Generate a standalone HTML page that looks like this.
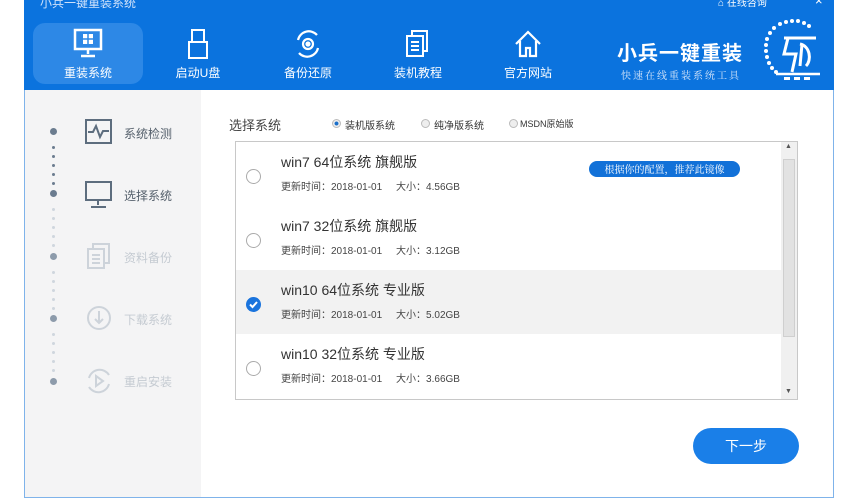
<!DOCTYPE html>
<html><head><meta charset="utf-8"><style>
*{margin:0;padding:0;box-sizing:border-box}
body{width:855px;height:501px;background:#fff;position:relative;overflow:hidden;font-family:"Liberation Sans","Noto Sans CJK SC",sans-serif}
.abs{position:absolute}
.hdr{left:24px;top:0;width:810px;height:90px;background:#0b73de}
.win{left:24px;top:90px;width:810px;height:408px;border:1px solid #7fb3ea;border-top:none;background:#fff}
.side{left:25px;top:90px;width:176px;height:407px;background:#f4f4f5}
.tab{position:absolute;top:23px;width:110px;height:61px;color:#fff;font-size:12px;text-align:center}
.tab span{position:absolute;left:0;right:0;top:41px}
.tab svg{position:absolute;left:40px;top:5px}
.step{position:absolute;left:124px;font-size:12px}
.dot{position:absolute;width:7px;height:7px;border-radius:50%;left:50px}
.sd{position:absolute;width:3px;height:3px;border-radius:50%;left:52px}
.row{position:absolute;left:236px;width:545px;height:64px}
.t1{position:absolute;left:45px;top:10px;font-size:14px;color:#333}
.t2{position:absolute;left:45px;top:36px;font-size:10px;color:#444}
.rad{position:absolute;left:10px;top:27px;width:15px;height:15px;border:1px solid #aaa;border-radius:50%;background:#fff}
</style></head><body>
<div class="abs hdr"></div>
<div class="abs" style="left:40px;top:-6px;color:#cfe2fb;font-size:12px">小兵一键重装系统</div>
<div class="abs" style="left:718px;top:-6px;color:#fff;font-size:10px">⌂ 在线咨询</div>
<div class="abs" style="left:815px;top:-7px;color:#fff;font-size:13px">×</div>
<div class="tab" style="left:33px;background:#2d88e6;border-radius:12px">
<svg width="30" height="32" viewBox="0 0 30 32" fill="none" stroke="#fff" stroke-width="2.5"><rect x="2" y="2" width="26" height="19"/><path d="M15 21v5M8 28h14" /><rect x="10" y="6" width="10" height="10" fill="#fff" stroke="none"/><path d="M15 6v10M10 11h10" stroke="#2d88e6" stroke-width="1.5"/></svg><span>重装系统</span></div>
<div class="tab" style="left:143px"><svg width="30" height="32" viewBox="0 0 30 32" fill="none" stroke="#fff" stroke-width="2"><rect x="9" y="2" width="12" height="12"/><rect x="6" y="14" width="18" height="16"/></svg><span>启动U盘</span></div>
<div class="tab" style="left:253px"><svg width="30" height="32" viewBox="0 0 30 32" fill="none" stroke="#fff" stroke-width="2.2"><path d="M5 12a11 11 0 0 1 19-5M25 20a11 11 0 0 1-19 5"/><circle cx="15" cy="16" r="5"/><circle cx="15" cy="16" r="1.5" fill="#fff"/></svg><span>备份还原</span></div>
<div class="tab" style="left:363px"><svg width="30" height="32" viewBox="0 0 30 32" fill="none" stroke="#fff" stroke-width="2"><rect x="4" y="8" width="16" height="20"/><path d="M9 8V3h15v20h-4M8 14h8M8 18h8M8 22h8"/></svg><span>装机教程</span></div>
<div class="tab" style="left:473px"><svg width="30" height="32" viewBox="0 0 30 32" fill="none" stroke="#fff" stroke-width="2.2"><path d="M3 16L15 4l12 12M7 13v15h6v-8h4v8h6V13"/></svg><span>官方网站</span></div>
<div class="abs" style="left:617px;top:37px;color:#fff;font-size:20px;font-weight:bold;letter-spacing:1px">小兵一键重装</div>
<div class="abs" style="left:621px;top:67px;color:#dce9fb;font-size:10px;letter-spacing:2px;font-family:'Noto Serif CJK SC',serif">快速在线重装系统工具</div>
<svg class="abs" style="left:758px;top:18px" width="72" height="64" viewBox="0 0 72 64" fill="#fff"><g>
<circle cx="28" cy="4" r="2"/><circle cx="34" cy="3" r="2"/><circle cx="40" cy="3" r="2"/><circle cx="46" cy="5" r="2"/><circle cx="51" cy="8" r="2"/><circle cx="22" cy="6" r="2"/><circle cx="16" cy="10" r="2"/><circle cx="12" cy="15" r="2"/><circle cx="9" cy="21" r="2"/><circle cx="8" cy="27" r="2"/><circle cx="8" cy="33" r="2"/><circle cx="9" cy="39" r="2"/><circle cx="11" cy="45" r="2"/><circle cx="14" cy="50" r="2"/><circle cx="18" cy="54" r="2"/></g>
<path d="M26 20h32M30 20l-4 16h12l-4 18M42 26c10 2 12 16 6 22M44 26l-2 22" stroke="#fff" stroke-width="3" fill="none"/><path d="M18 56h44" stroke="#fff" stroke-width="2.5"/><rect x="26" y="59" width="6" height="3"/><rect x="36" y="59" width="6" height="3"/><rect x="46" y="59" width="6" height="3"/></svg>
<div class="abs win"></div>
<div class="abs side"></div>
<!-- steps -->
<div class="dot" style="top:128px;background:#6b7c8f"></div>
<div class="dot" style="top:190px;background:#6b7c8f"></div>
<div class="dot" style="top:253px;background:#8d9bab"></div>
<div class="dot" style="top:315px;background:#8d9bab"></div>
<div class="dot" style="top:378px;background:#8d9bab"></div>
<div class="sd" style="top:146px;background:#6b7c8f"></div><div class="sd" style="top:155px;background:#6b7c8f"></div><div class="sd" style="top:164px;background:#6b7c8f"></div><div class="sd" style="top:173px;background:#6b7c8f"></div><div class="sd" style="top:182px;background:#6b7c8f"></div>
<div class="sd" style="top:208px;background:#cfd6de"></div><div class="sd" style="top:217px;background:#cfd6de"></div><div class="sd" style="top:226px;background:#cfd6de"></div><div class="sd" style="top:235px;background:#cfd6de"></div><div class="sd" style="top:244px;background:#cfd6de"></div>
<div class="sd" style="top:271px;background:#cfd6de"></div><div class="sd" style="top:280px;background:#cfd6de"></div><div class="sd" style="top:289px;background:#cfd6de"></div><div class="sd" style="top:298px;background:#cfd6de"></div><div class="sd" style="top:307px;background:#cfd6de"></div>
<div class="sd" style="top:333px;background:#cfd6de"></div><div class="sd" style="top:342px;background:#cfd6de"></div><div class="sd" style="top:351px;background:#cfd6de"></div><div class="sd" style="top:360px;background:#cfd6de"></div><div class="sd" style="top:369px;background:#cfd6de"></div>
<svg class="abs" style="left:85px;top:118px" width="28" height="28" fill="none" stroke="#5d6d7e" stroke-width="2"><rect x="1" y="2" width="25" height="23"/><path d="M3 14h5l3-6 4 11 3-6h6"/></svg>
<div class="step" style="top:125px;color:#55606c">系统检测</div>
<svg class="abs" style="left:85px;top:180px" width="28" height="30" fill="none" stroke="#5d6d7e" stroke-width="2"><rect x="1" y="2" width="25" height="18"/><path d="M13 20v5M6 27h15"/></svg>
<div class="step" style="top:187px;color:#55606c">选择系统</div>
<svg class="abs" style="left:86px;top:242px" width="28" height="28" fill="none" stroke="#cdd3da" stroke-width="2"><rect x="2" y="7" width="16" height="19"/><path d="M7 7V2h16v19h-5M6 13h8M6 17h8M6 21h8"/></svg>
<div class="step" style="top:249px;color:#c5cbd2">资料备份</div>
<svg class="abs" style="left:86px;top:305px" width="28" height="28" fill="none" stroke="#cdd3da" stroke-width="2"><circle cx="13" cy="13" r="11"/><path d="M13 6v12M9 14l4 4 4-4"/></svg>
<div class="step" style="top:311px;color:#c5cbd2">下载系统</div>
<svg class="abs" style="left:84px;top:366px" width="30" height="30" fill="none" stroke="#cdd3da" stroke-width="2"><path d="M5 12a11 11 0 0 1 20-3M25 18a11 11 0 0 1-20 3"/><path d="M12 10v10l7-5z"/></svg>
<div class="step" style="top:373px;color:#c5cbd2">重启安装</div>
<!-- content -->
<div class="abs" style="left:229px;top:115px;font-size:13px;color:#444">选择系统</div>
<div class="abs" style="left:332px;top:119px;width:9px;height:9px;border-radius:50%;border:1px solid #bbb;background:radial-gradient(#1a6fc9 35%,#eee 45%)"></div>
<div class="abs" style="left:345px;top:117px;font-size:10px;color:#333">装机版系统</div>
<div class="abs" style="left:421px;top:119px;width:9px;height:9px;border-radius:50%;border:1px solid #bbb;background:#eee"></div>
<div class="abs" style="left:434px;top:117px;font-size:10px;color:#333">纯净版系统</div>
<div class="abs" style="left:509px;top:119px;width:9px;height:9px;border-radius:50%;border:1px solid #bbb;background:#eee"></div>
<div class="abs" style="left:520px;top:117px;font-size:9px;color:#333">MSDN原始版</div>
<div class="abs" style="left:235px;top:141px;width:563px;height:259px;border:1px solid #c8c8c8;background:#fff"></div>
<div class="row" style="top:142px"><div class="rad"></div><div class="t1">win7 64位系统 旗舰版</div><div class="t2">更新时间：2018-01-01 &nbsp;&nbsp;&nbsp; 大小：4.56GB</div></div>
<div class="abs" style="left:589px;top:161px;width:151px;height:16px;border-radius:8px;background:#1271d8;color:#fff;font-size:10px;text-align:center;line-height:16px;font-family:'Noto Serif CJK SC',serif">根据你的配置，推荐此镜像</div>
<div class="row" style="top:206px"><div class="rad"></div><div class="t1">win7 32位系统 旗舰版</div><div class="t2">更新时间：2018-01-01 &nbsp;&nbsp;&nbsp; 大小：3.12GB</div></div>
<div class="row" style="top:270px;background:#f2f2f2"><div class="rad" style="border:none;background:#1a74dd"><svg width="15" height="15"><path d="M4 7.5l2.5 2.5 4.5-5" stroke="#fff" stroke-width="2" fill="none"/></svg></div><div class="t1">win10 64位系统 专业版</div><div class="t2">更新时间：2018-01-01 &nbsp;&nbsp;&nbsp; 大小：5.02GB</div></div>
<div class="row" style="top:334px"><div class="rad"></div><div class="t1">win10 32位系统 专业版</div><div class="t2">更新时间：2018-01-01 &nbsp;&nbsp;&nbsp; 大小：3.66GB</div></div>
<div class="abs" style="left:781px;top:142px;width:16px;height:257px;background:#f0f0f0"></div>
<div class="abs" style="left:783px;top:159px;width:12px;height:178px;background:#e2e2e2;border:1px solid #cfcfcf"></div>
<div class="abs" style="left:785px;top:143px;font-size:7px;color:#555">▲</div>
<div class="abs" style="left:785px;top:388px;font-size:7px;color:#555">▼</div>
<div class="abs" style="left:693px;top:428px;width:106px;height:36px;border-radius:18px;background:#1a7fe8;color:#fff;font-size:14px;text-align:center;line-height:36px">下一步</div>
</body></html>
